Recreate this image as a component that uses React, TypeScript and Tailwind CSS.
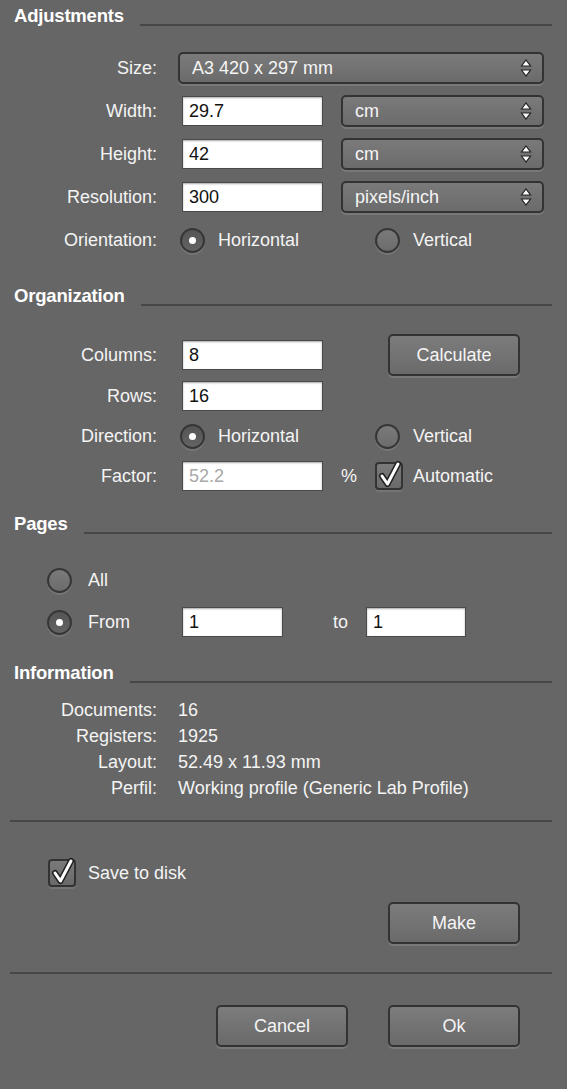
import React from 'react';

// Shared look for the dark Mac-style controls.
const btn =
  'flex items-center justify-center rounded-[5px] border-2 border-[#333333] bg-gradient-to-b from-[#7c7c7c] to-[#6a6a6a] text-[#f5f5f5] shadow-[0_2px_0_rgba(255,255,255,0.13)]';

const Label = ({ children }: { children: React.ReactNode }) => (
  <div className="w-[157px] shrink-0 text-right">{children}</div>
);

const Header = ({ title, className = '' }: { title: string; className?: string }) => (
  <div className={`flex h-[32px] items-center pl-[14px] pr-[15px] ${className}`}>
    <span className="text-[18.5px] font-bold tracking-[-0.2px] text-white">{title}</span>
    <div className="ml-[16px] mt-[18px] h-[2px] flex-1 bg-[#474747]" />
  </div>
);

const Arrows = () => (
  <svg width="12" height="20" viewBox="0 0 12 20" className="shrink-0">
    <polygon points="1.5,8 6,2 10.5,8" fill="#ffffff" stroke="#222" strokeWidth="1.2" />
    <polygon points="1.5,12 6,18 10.5,12" fill="#ffffff" stroke="#222" strokeWidth="1.2" />
  </svg>
);

const Select = ({ value, className = '' }: { value: string; className?: string }) => (
  <div
    className={`flex h-[32px] items-center justify-between rounded-[5px] border-2 border-[#333333] bg-gradient-to-b from-[#7a7a7a] to-[#6b6b6b] pl-[12px] pr-[10px] text-[#f5f5f5] shadow-[0_2px_0_rgba(255,255,255,0.12)] ${className}`}
  >
    <span>{value}</span>
    <Arrows />
  </div>
);

const Input = ({ value, className = '', muted = false }: { value: string; className?: string; muted?: boolean }) => (
  <div
    className={`flex h-[30px] items-center border border-[#4a4a4a] bg-white pl-[6px] shadow-[inset_0_1px_2px_rgba(0,0,0,0.35)] ${muted ? 'text-[#a8a8a8]' : 'text-[#111111]'} ${className}`}
  >
    {value}
  </div>
);

const Radio = ({ checked = false }: { checked?: boolean }) => (
  <div
    className={`flex h-[25px] w-[25px] shrink-0 items-center justify-center rounded-full border-2 border-[#363636] shadow-[0_2px_0_rgba(255,255,255,0.1)] ${
      checked ? 'bg-gradient-to-b from-[#555555] to-[#636363]' : 'bg-gradient-to-b from-[#7a7a7a] to-[#6c6c6c]'
    }`}
  >
    {checked && <div className="h-[7px] w-[7px] rounded-full bg-white" />}
  </div>
);

const Checkbox = () => (
  <div className="relative h-[28px] w-[28px] shrink-0 rounded-[4px] border-2 border-[#333333] bg-gradient-to-b from-[#7a7a7a] to-[#6a6a6a] shadow-[0_2px_0_rgba(255,255,255,0.1)]">
    {/* The tick reaches the top edge of the box */}
    <svg width="28" height="30" viewBox="0 0 28 30" className="absolute left-[-2px] top-[-4px]">
      <path d="M7 16 L12.5 24 L23 4" fill="none" stroke="#222" strokeWidth="6" strokeLinecap="round" strokeLinejoin="round" />
      <path d="M7 16 L12.5 24 L23 4" fill="none" stroke="#fff" strokeWidth="3" strokeLinecap="round" strokeLinejoin="round" />
    </svg>
  </div>
);

export default function App() {
  return (
    <div className="h-[1089px] w-[567px] overflow-hidden bg-[#666666] font-['Liberation_Sans',Arial,sans-serif] text-[18px] text-[#f4f4f4]">
      {/* ADJUSTMENTS */}
      <Header title="Adjustments" />

      <div className="mt-[20px] flex h-[32px] items-center">
        <Label>Size:</Label>
        <Select value="A3 420 x 297 mm" className="ml-[21px] w-[366px]" />
      </div>

      {[
        ['Width:', '29.7', 'cm'],
        ['Height:', '42', 'cm'],
        ['Resolution:', '300', 'pixels/inch'],
      ].map(([label, value, unit]) => (
        <div key={label} className="mt-[11px] flex h-[32px] items-center">
          <Label>{label}</Label>
          <Input value={value} className="ml-[25px] w-[141px]" />
          <Select value={unit} className="ml-[18px] w-[203px]" />
        </div>
      ))}

      <div className="mt-[13px] flex h-[28px] items-center">
        <Label>Orientation:</Label>
        <div className="ml-[23px] flex w-[195px] items-center">
          <Radio checked />
          <span className="ml-[13px]">Horizontal</span>
        </div>
        <div className="flex items-center">
          <Radio />
          <span className="ml-[13px]">Vertical</span>
        </div>
      </div>

      {/* ORGANIZATION */}
      <Header title="Organization" className="mt-[26px]" />

      <div className="mt-[28px] flex h-[30px] items-center">
        <Label>Columns:</Label>
        <Input value="8" className="ml-[25px] w-[141px]" />
        <button className={`${btn} ml-[65px] h-[42px] w-[132px] shrink-0`}>Calculate</button>
      </div>

      <div className="mt-[11px] flex h-[30px] items-center">
        <Label>Rows:</Label>
        <Input value="16" className="ml-[25px] w-[141px]" />
      </div>

      <div className="mt-[13px] flex h-[24px] items-center">
        <Label>Direction:</Label>
        <div className="ml-[23px] flex w-[195px] items-center">
          <Radio checked />
          <span className="ml-[13px]">Horizontal</span>
        </div>
        <div className="flex items-center">
          <Radio />
          <span className="ml-[13px]">Vertical</span>
        </div>
      </div>

      <div className="mt-[13px] flex h-[30px] items-center">
        <Label>Factor:</Label>
        <Input value="52.2" muted className="ml-[25px] w-[141px]" />
        <span className="ml-[18px] w-[34px]">%</span>
        <Checkbox />
        <span className="ml-[10px]">Automatic</span>
      </div>

      {/* PAGES */}
      <Header title="Pages" className="mt-[17px]" />

      <div className="mt-[27px] flex h-[26px] items-center pl-[47px]">
        <Radio />
        <span className="ml-[16px]">All</span>
      </div>

      <div className="mt-[14px] flex h-[30px] items-center pl-[47px]">
        <Radio checked />
        <span className="ml-[16px] w-[94px]">From</span>
        <Input value="1" className="w-[101px]" />
        <span className="ml-[50px] w-[33px]">to</span>
        <Input value="1" className="w-[100px]" />
      </div>

      {/* INFORMATION */}
      <Header title="Information" className="mt-[20px]" />

      <div className="mt-[8px]">
        {[
          ['Documents:', '16'],
          ['Registers:', '1925'],
          ['Layout:', '52.49 x 11.93 mm'],
          ['Perfil:', 'Working profile (Generic Lab Profile)'],
        ].map(([label, value]) => (
          <div key={label} className="flex h-[26px] items-center">
            <Label>{label}</Label>
            <span className="ml-[21px]">{value}</span>
          </div>
        ))}
      </div>

      <div className="ml-[10px] mr-[15px] mt-[19px] h-[2px] bg-[#474747]" />

      <div className="mt-[37px] flex h-[28px] items-center pl-[48px]">
        <Checkbox />
        <span className="ml-[12px]">Save to disk</span>
      </div>

      <button className={`${btn} ml-[388px] mt-[15px] h-[42px] w-[132px]`}>Make</button>

      <div className="ml-[10px] mr-[15px] mt-[28px] h-[2px] bg-[#474747]" />

      <div className="mt-[31px] flex">
        <button className={`${btn} ml-[216px] h-[42px] w-[132px]`}>Cancel</button>
        <button className={`${btn} ml-[40px] h-[42px] w-[132px]`}>Ok</button>
      </div>
    </div>
  );
}
